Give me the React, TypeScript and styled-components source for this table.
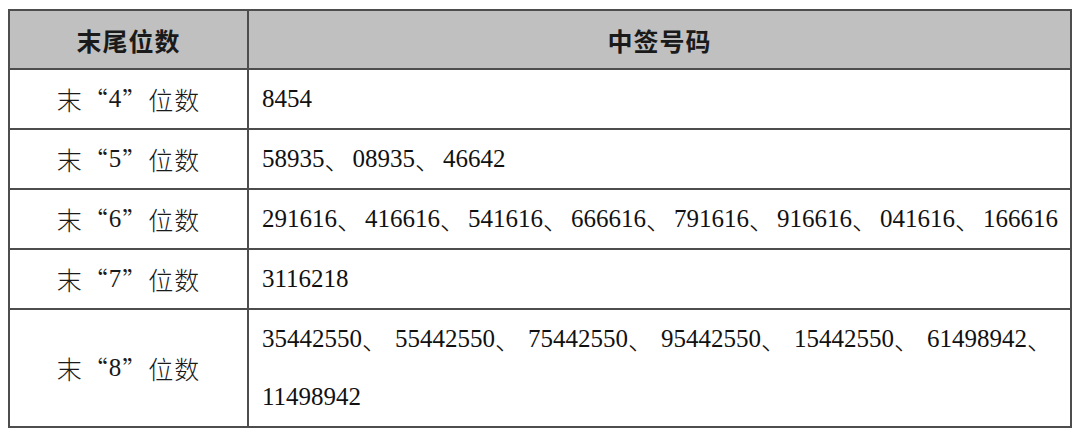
import React from "react";
import styled, { createGlobalStyle } from "styled-components";

const GlobalStyle = createGlobalStyle`
  html, body { margin: 0; padding: 0; background: #ffffff; }
  body { font-family: "Liberation Serif", "Noto Sans CJK SC", serif; }
`;

const Page = styled.div`
  padding: 9px 8px 0 8px;
`;

const Table = styled.table`
  width: 1064px;
  border-collapse: collapse;
  table-layout: fixed;
  border: 2px solid #4d4d4d;
`;

const Col = styled.col<{ $w?: number }>`
  width: ${(p) => (p.$w ? `${p.$w}px` : "auto")};
`;

const HeadCell = styled.th`
  background: #c0c0c0;
  border: 2px solid #4d4d4d;
  height: 57px;
  padding: 0;
  text-align: center;
  vertical-align: middle;
  font-family: "Noto Sans CJK SC", sans-serif;
  font-weight: 700;
  font-size: 25px;
  line-height: 30px;
  color: #1a1a1a;
  letter-spacing: 1px;
`;

const LabelCell = styled.td`
  border: 2px solid #4d4d4d;
  padding: 0;
  vertical-align: middle;
`;

const Label = styled.div`
  display: flex;
  align-items: center;
  justify-content: center;
  height: 58px;
  font-family: "Liberation Serif", "Noto Sans CJK SC", serif;
  font-size: 25px;
  font-weight: 300;
  color: #1a1a1a;
  letter-spacing: 1px;
  white-space: pre;
`;

const NumCell = styled.td`
  border: 2px solid #4d4d4d;
  padding: 0 0 0 13px;
  vertical-align: middle;
`;

const Line = styled.div`
  display: flex;
  align-items: center;
  height: 58px;
  font-family: "Liberation Serif", "Noto Sans CJK SC", serif;
  font-size: 25px;
  color: #111;
  white-space: pre;
`;

const Quote = styled.span`
  font-family: "Noto Sans CJK SC", sans-serif;
  font-weight: 300;
`;

const Sep = styled.span<{ $gap: number }>`
  font-family: "Noto Sans CJK SC", sans-serif;
  font-weight: 300;
  padding-right: ${(p) => p.$gap}px;
`;

const rows: { digit: string; gap: number; numbers: string[][] }[] = [
  { digit: "4", gap: 3, numbers: [["8454"]] },
  { digit: "5", gap: 3, numbers: [["58935", "08935", "46642"]] },
  {
    digit: "6",
    gap: 3,
    numbers: [
      ["291616", "416616", "541616", "666616", "791616", "916616", "041616", "166616"],
    ],
  },
  { digit: "7", gap: 3, numbers: [["3116218"]] },
  {
    digit: "8",
    gap: 8,
    numbers: [
      ["35442550", "55442550", "75442550", "95442550", "15442550", "61498942", ""],
      ["11498942"],
    ],
  },
];

function NumberLine({ items, gap }: { items: string[]; gap: number }) {
  return (
    <Line>
      {items.map((n, i) => (
        <React.Fragment key={i}>
          {n}
          {i < items.length - 1 && <Sep $gap={gap}>、</Sep>}
        </React.Fragment>
      ))}
    </Line>
  );
}

export default function App() {
  return (
    <>
      <GlobalStyle />
      <Page>
        <Table>
          <colgroup>
            <Col $w={239} />
            <Col />
          </colgroup>
          <thead>
            <tr>
              <HeadCell>末尾位数</HeadCell>
              <HeadCell>中签号码</HeadCell>
            </tr>
          </thead>
          <tbody>
            {rows.map((r) => (
              <tr key={r.digit}>
                <LabelCell>
                  <Label>
                    末<Quote>“</Quote>{r.digit}<Quote>”</Quote>位数
                  </Label>
                </LabelCell>
                <NumCell>
                  {r.numbers.map((line, i) => (
                    <NumberLine key={i} items={line} gap={r.gap} />
                  ))}
                </NumCell>
              </tr>
            ))}
          </tbody>
        </Table>
      </Page>
    </>
  );
}
